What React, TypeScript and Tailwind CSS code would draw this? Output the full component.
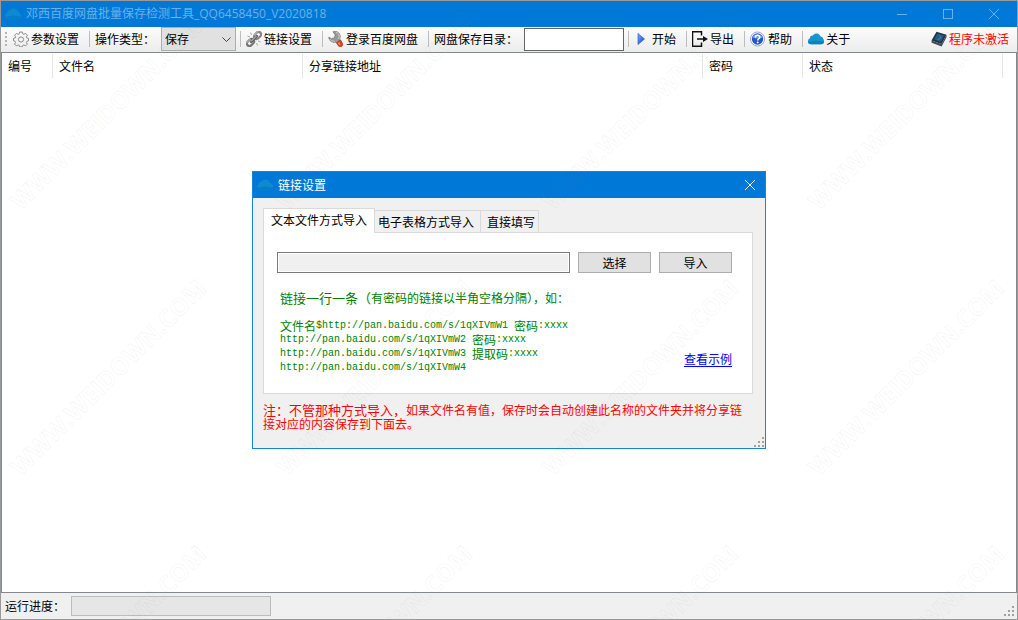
import React, { useState } from 'react';

type TabId = 'text' | 'sheet' | 'direct';

const TABS: { id: TabId; label: string; className: string }[] = [
  { id: 'text', label: '文本文件方式导入', className: 'px-[7px]' },
  { id: 'sheet', label: '电子表格方式导入', className: 'pl-[3px] pr-[6px]' },
  { id: 'direct', label: '直接填写', className: 'pl-[6px] pr-[3px]' },
];

const COLUMNS: { label: string; className: string }[] = [
  { label: '编号', className: 'w-[51px]' },
  { label: '文件名', className: 'w-[250px]' },
  { label: '分享链接地址', className: 'w-[400px]' },
  { label: '密码', className: 'w-[100px]' },
  { label: '状态', className: 'w-[200px]' },
];

const CloudIcon: React.FC<{ className?: string }> = ({ className = '' }) => (
  <svg viewBox="0 0 16 16" className={`w-4 h-4 shrink-0 ${className}`} aria-hidden="true">
    <g fill="#1797cd">
      <circle cx="8.500" cy="6.800" r="4.200" />
      <circle cx="4.600" cy="7.200" r="2.700" />
      <circle cx="12" cy="8.800" r="3.200" />
      <rect x="0" y="7.300" width="16" height="6" rx="3" />
    </g>
    <path d="M0 10.300c3 .6 5-.9 8-.9s5 .9 8 .9a3 3 0 0 1-3 3H3a3 3 0 0 1-3-3z" fill="#0b82ba" />
  </svg>
);

const GearIcon = () => (
  <svg viewBox="0 0 16 16" className="w-4 h-4 shrink-0" fill="none" stroke="#8b8b8b" aria-hidden="true">
    <path d="M6.700 1h2.600l.5 1.900 1.100.5 1.700-1 1.800 1.800-1 1.700.5 1.100 1.600.4v2.400l-1.600.5-.5 1.100 1 1.700-1.800 1.800-1.700-1-1.100.5-.5 1.500H6.700l-.5-1.500-1.100-.5-1.700 1-1.800-1.800 1-1.700-.5-1.100L.5 9.800V7.400L2.100 7l.5-1.100-1-1.700 1.800-1.800 1.700 1 1.100-.5z" strokeLinejoin="round" />
    <circle cx="8" cy="8.500" r="2.600" />
  </svg>
);

const ChainIcon = () => (
  <svg viewBox="0 0 16 16" className="w-4 h-4 shrink-0" fill="none" aria-hidden="true">
    <g transform="rotate(-45 8 8)">
      <rect x="-1" y="5.500" width="8" height="5" rx="2.500" stroke="#777" strokeWidth="2.200" />
      <rect x="9" y="5.500" width="8" height="5" rx="2.500" stroke="#858585" strokeWidth="2.200" />
      <path d="M4 8h8" stroke="#666" strokeWidth="2.600" strokeLinecap="round" />
      <path d="M-.5 5.500h6M10.500 5.500h6M4.500 7.600h7" stroke="#d0d0d0" strokeWidth=".9" />
    </g>
    <path d="M5.500 4 4.500 1.500M4 6 1.500 5M10.500 12l1 2.500M12 10l2.500 1" stroke="#a5a5a5" />
  </svg>
);

const WrenchIcon = () => (
  <svg viewBox="0 0 16 16" className="w-4 h-4 shrink-0" aria-hidden="true">
    <path d="M5 .8C8.500-.6 12.300 1.800 12.200 5.600c0 1.200-.3 2.100-.9 2.900l1.200 1.600-3.400 2.600-1.300-1.500C4.500 11.900 1 10 .8 6.200l2.700 1.500 3-1L7.200 3.900z" fill="#999" stroke="#6c6c6c" strokeWidth=".7" />
    <path d="M8 1.200c2 .6 3.300 2.200 3.200 4.500-.1 1-.4 1.700-.9 2.300M1.800 8c1 1.600 2.800 2.400 4.700 2.200" stroke="#d4d4d4" fill="none" />
    <path d="m8.600 11.800 3.900-3 1.700 3c.9 1.600.5 3-.7 3.700-1.300.6-2.700.3-3.500-1.200z" fill="#d9451f" stroke="#9f2a12" strokeWidth=".6" />
    <path d="m10.600 11.600 1.200 2.200" stroke="#ffa37a" strokeWidth="1.200" />
  </svg>
);

const PlayIcon = () => (
  <svg viewBox="0 0 16 16" className="w-4 h-4 shrink-0" aria-hidden="true">
    <defs>
      <linearGradient id="play" x1="0" x2="1" y2="1">
        <stop stopColor="#7fb0ff" />
        <stop offset="1" stopColor="#0a3fc0" />
      </linearGradient>
    </defs>
    <path d="M4 2.500v11L10.500 8z" fill="url(#play)" stroke="#2a5fd0" strokeWidth=".7" />
  </svg>
);

const ExportIcon = () => (
  <svg viewBox="0 0 16 16" className="w-4 h-4 shrink-0" aria-hidden="true">
    <path d="M9.500 4.500V.8H.5v14.400h9v-3.700" fill="none" stroke="#111" strokeWidth="1.500" />
    <path d="M5 8h7" stroke="#111" strokeWidth="1.500" />
    <path d="M11 5v6l5-3z" fill="#111" />
  </svg>
);

const HelpIcon = () => (
  <svg viewBox="0 0 16 16" className="w-4 h-4 shrink-0" fill="none" aria-hidden="true">
    <circle cx="7.500" cy="8" r="7" fill="#fff" stroke="#7890c8" strokeWidth=".8" />
    <circle cx="7.500" cy="8" r="5.700" fill="#2456c4" />
    <path d="M2.500 6.500C4 2.300 11 2.300 12.500 6.500 10 8 5 8 2.500 6.500z" fill="#6f9aea" />
    <path d="M5.400 6.400c0-2.700 4.400-2.700 4.400-.2 0 1.600-2.100 1.500-2.100 3.200" stroke="#fff" strokeWidth="1.500" />
    <circle cx="7.700" cy="11.400" r=".95" fill="#fff" />
  </svg>
);

const BookIcon = () => (
  <svg viewBox="0 0 16 16" className="w-4 h-4 shrink-0" aria-hidden="true">
    <path d="M5.500.8 15.500 3.800 10.500 13 .5 9.500z" fill="#1f3446" />
    <path d="M.5 9.500 10.500 13l5-9.200v2.400L10.600 15.500.7 11.800z" fill="#3f4c57" />
    <path d="m6.300 2.600 6.800 2-3.300 6.200-6.500-2.200z" fill="#265c80" />
    <path d="m8.500 4.300 1.300 3-3.500 1.500" stroke="#3b85b0" fill="none" />
  </svg>
);

const CloseIcon = () => (
  <svg viewBox="0 0 10 10" className="w-[10px] h-[10px]" stroke="currentColor" aria-hidden="true">
    <path d="m0 0 10 10M10 0 0 10" />
  </svg>
);

const SizeGrip: React.FC<{ className?: string }> = ({ className = '' }) => (
  <svg viewBox="0 0 10 10" className={`w-[10px] h-[10px] ${className}`} fill="#a0a0a0" aria-hidden="true">
    <path d="M8 0h2v2H8zM4 4h2v2H4zM8 4h2v2H8zM0 8h2v2H0zM4 8h2v2H4zM8 8h2v2H8z" />
  </svg>
);

const Separator = () => <span className="w-px h-4 shrink-0 mr-[5px] bg-[#bdbdbd]" />;

const ToolButton: React.FC<{ icon: React.ReactNode; children: React.ReactNode }> = ({ icon, children }) => (
  <button className="flex items-center gap-[2px] mr-[10px] whitespace-nowrap">
    {icon}
    {children}
  </button>
);

// Tiled diagonal site mark drawn over the whole window
const Watermark = () => (
  <svg className="absolute inset-0 w-full h-full pointer-events-none" aria-hidden="true">
    {[210, 476, 742].map((y) =>
      [20, 286, 552, 818].map((x) => (
        <text
          key={`${x}-${y}`}
          transform={`translate(${x} ${y}) rotate(-45)`}
          className="text-[24px] font-bold font-['Open_Sans',sans-serif]"
          fill="none"
          stroke="#808080"
          strokeOpacity="0.07"
          strokeWidth="1"
        >
          WWW.WEIDOWN.COM
        </text>
      ))
    )}
  </svg>
);

const LinkDialog = () => {
  const [activeTab, setActiveTab] = useState<TabId>('text');

  return (
    <div className="absolute inset-0 flex items-center justify-center">
      <section role="dialog" aria-label="链接设置" className="w-[514px] border border-[#1883d7] bg-[#f0f0f0]">
        <header className="flex items-center h-[26px] pl-1 pr-[10px] bg-[#0078d7] text-white">
          <CloudIcon className="opacity-60" />
          <h2 className="ml-[5px]">链接设置</h2>
          <button aria-label="关闭" className="ml-auto"><CloseIcon /></button>
        </header>

        <div className="px-[10px] pt-[10px]">
          <div className="flex items-end" role="tablist" aria-label="导入方式">
            {TABS.map((tab) => (
              <button
                key={tab.id}
                role="tab"
                aria-selected={activeTab === tab.id}
                onClick={() => setActiveTab(tab.id)}
                className={`border border-b-0 border-[#d9d9d9] ${tab.className} ${
                  activeTab === tab.id ? 'h-[25px] -mb-px pb-[2px] bg-white relative' : 'h-[22px] border-l-0'
                }`}
              >
                {tab.label}
              </button>
            ))}
          </div>

          <div role="tabpanel" className="mr-[2px] border border-[#d9d9d9] bg-white pl-[13px] pr-5 pt-[19px] pb-[18px]">
            <div className="flex gap-2">
              <input
                readOnly
                aria-label="文件路径"
                className="flex-1 min-w-0 h-[21px] border border-[#7a7a7a] bg-[#f0f0f0] shadow-[inset_0_0_0_1px_#fff] outline-none"
              />
              <button className="w-[73px] h-[21px] border border-[#adadad] bg-[#e1e1e1] leading-[18px]">选择</button>
              <button className="w-[73px] h-[21px] border border-[#adadad] bg-[#e1e1e1] leading-[18px]">导入</button>
            </div>

            <div className="flex items-end justify-between mt-[18px] pl-[3px]">
              <div className="leading-[14px] text-[#008000] whitespace-nowrap [&_p]:flex [&_p]:items-center [&_p]:h-[14px]">
                <p className="mb-[14px]">
                  <span className="text-[13px]">链接一行一条（</span>有密码的链接以半角空格分隔），如：
                </p>
                <p>文件名<code>$http://pan.baidu.com/s/1qXIVmW1 </code>密码<code>:xxxx</code></p>
                <p><code>http://pan.baidu.com/s/1qXIVmW2 </code>密码<code>:xxxx</code></p>
                <p><code>http://pan.baidu.com/s/1qXIVmW3 </code>提取码<code>:xxxx</code></p>
                <p><code>http://pan.baidu.com/s/1qXIVmW4</code></p>
              </div>
              <a href="#example" className="mb-2 text-[#0000ff] underline underline-offset-2">查看示例</a>
            </div>
          </div>

          <p className="mt-[9px] leading-[14px] text-[#ff0000] whitespace-nowrap">
            <span className="text-[13px] leading-none">注：不管那种方式导入，</span>如果文件名有值，保存时会自动创建此名称的文件夹并将分享链
            <br />
            接对应的内容保存到下面去。
          </p>
        </div>
        <SizeGrip className="ml-auto mt-[6px] mr-[1px] mb-[1px]" />
      </section>
    </div>
  );
};

const App = () => {
  return (
    <main className="relative flex flex-col h-screen overflow-hidden border border-[#999] bg-[#f0f0f0] text-black text-[12px] leading-4 font-['Noto_Sans_CJK_SC',sans-serif] [&_code]:font-['Liberation_Mono',monospace] [&_code]:text-[10px] [&_code]:whitespace-pre">
      <header className="flex items-center h-[26px] shrink-0 pl-1 bg-[#0078d7] text-[#6bb1e8]">
        <CloudIcon className="opacity-60" />
        <h1 className="ml-[5px] font-['Open_Sans','Noto_Sans_CJK_SC',sans-serif]">邓西百度网盘批量保存检测工具_QQ6458450_V2020818</h1>
        <div className="flex ml-auto">
          <button aria-label="最小化" className="w-[46px] h-[26px] flex items-center justify-center">
            <span className="w-[10px] h-px bg-current" />
          </button>
          <button aria-label="最大化" className="w-[46px] h-[26px] flex items-center justify-center">
            <span className="w-[10px] h-[10px] border border-current" />
          </button>
          <button aria-label="关闭" className="w-[46px] h-[26px] flex items-center justify-center">
            <CloseIcon />
          </button>
        </div>
      </header>

      <nav className="flex items-center h-[25px] shrink-0 pl-1 pr-2 pb-px bg-linear-to-b from-[#fcfcfc] to-[#ececec] whitespace-nowrap">
        <span className="w-[2px] h-[14px] mr-[6px] bg-[repeating-linear-gradient(#b4b4b4_0_2px,transparent_2px_4px)]" />
        <ToolButton icon={<GearIcon />}>参数设置</ToolButton>
        <Separator />
        <label htmlFor="mode" className="mr-[6px]">操作类型：</label>
        <div className="relative mr-1">
          <select id="mode" className="appearance-none block w-[75px] h-[24px] pl-[3px] border border-[#adadad] bg-[#e1e1e1] outline-none">
            <option>保存</option>
            <option>检测</option>
          </select>
          <svg viewBox="0 0 9 5" className="absolute right-[5px] top-[10px] w-[9px] h-[5px] pointer-events-none" fill="none" stroke="#444" aria-hidden="true">
            <path d="m.5.5 4 4 4-4" />
          </svg>
        </div>
        <Separator />
        <ToolButton icon={<ChainIcon />}>链接设置</ToolButton>
        <Separator />
        <ToolButton icon={<WrenchIcon />}>登录百度网盘</ToolButton>
        <Separator />
        <label htmlFor="folder" className="mr-[6px]">网盘保存目录：</label>
        <input id="folder" className="w-[100px] h-[23px] mr-1 px-1 border border-[#646464] bg-white outline-none" />
        <Separator />
        <ToolButton icon={<PlayIcon />}>开始</ToolButton>
        <Separator />
        <ToolButton icon={<ExportIcon />}>导出</ToolButton>
        <Separator />
        <ToolButton icon={<HelpIcon />}>帮助</ToolButton>
        <Separator />
        <ToolButton icon={<CloudIcon />}>关于</ToolButton>
        <button className="flex items-center gap-[2px] ml-auto text-[#ff0000]">
          <BookIcon />
          程序未激活
        </button>
      </nav>

      <div className="flex-1 min-h-0 border border-[#828790] bg-white">
        <table className="table-fixed w-[1001px]">
          <thead>
            <tr>
              {COLUMNS.map((column) => (
                <th key={column.label} className={`p-0 pt-px text-left font-normal ${column.className}`}>
                  <div className="h-6 pl-[6px] border-r border-[#e5e5e5] leading-[24px]">{column.label}</div>
                </th>
              ))}
            </tr>
          </thead>
        </table>
      </div>

      <footer className="flex items-center h-[26px] shrink-0 pl-1 pr-[3px]">
        <span id="progress-label">运行进度：</span>
        <div
          role="progressbar"
          aria-labelledby="progress-label"
          aria-valuenow={0}
          className="w-[200px] h-5 ml-[6px] border border-[#bcbcbc] bg-[#e6e6e6]"
        />
        <SizeGrip className="ml-auto self-end mb-[3px]" />
      </footer>

      <LinkDialog />
      <Watermark />
    </main>
  );
};

export default App;
